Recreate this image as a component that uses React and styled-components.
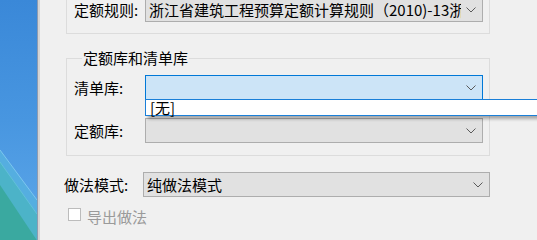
import React from 'react';
import styled, { createGlobalStyle } from 'styled-components';

const GlobalStyle = createGlobalStyle`
  html, body {
    margin: 0;
    padding: 0;
    background: #f0f0f0;
    overflow: hidden;
  }
  body {
    font-family: "Noto Sans CJK SC", "Microsoft YaHei", sans-serif;
    font-size: 15px;
    color: #000;
  }
`;

const Screen = styled.div`
  display: flex;
  width: 537px;
  height: 100vh;
  min-height: 219px;
  overflow: hidden;
`;

const Desktop = styled.div`
  width: 37px;
  flex-shrink: 0;
  background: linear-gradient(180deg, #3a88d8 0px, #4896e0 120px, #5aa5e8 219px);
  overflow: hidden;
`;

const Frame = styled.div`
  width: 3px;
  flex-shrink: 0;
  border-left: 1px solid #8e9bb0;
  background: #d4d4d4;
  box-sizing: border-box;
`;

const Dialog = styled.div`
  flex: 1;
  padding-left: 24px;
  margin-top: -20px;
  display: flex;
  flex-direction: column;
  align-items: flex-start;
`;

const Group = styled.div`
  width: 424px;
  box-sizing: border-box;
  margin-left: 2px;
  margin-top: ${p => p.$top || 0}px;
  border: 1px solid #dcdcdc;
  padding: ${p => p.$pad};
  display: flex;
  flex-direction: column;
`;

const GroupTitle = styled.span`
  display: block;
  width: fit-content;
  margin: -10px 0 8px 8px;
  padding: 0 1px;
  line-height: 18px;
  background: #f0f0f0;
`;

const Row = styled.div`
  display: flex;
  align-items: center;
  margin-top: ${p => p.$top || 0}px;
`;

const Label = styled.span`
  width: ${p => p.$w}px;
  flex-shrink: 0;
  line-height: 18px;
  white-space: nowrap;
`;

const Combo = styled.div`
  position: relative;
  width: ${p => p.$w}px;
  height: 25px;
  box-sizing: border-box;
  display: flex;
  align-items: center;
  border: 1px solid ${p => (p.$focus ? '#0078d7' : '#adadad')};
  background: ${p => (p.$focus ? '#cce4f7' : '#e1e1e1')};
`;

const ComboText = styled.span`
  flex: 1;
  min-width: 0;
  overflow: hidden;
  white-space: nowrap;
  padding-left: 3px;
  line-height: 23px;
`;

const Arrow = styled.span`
  width: 20px;
  flex-shrink: 0;
  display: flex;
  justify-content: center;
  padding-right: 1px;
`;

const DropList = styled.div`
  position: absolute;
  left: -1px;
  top: 100%;
  width: 420px;
  height: 17px;
  box-sizing: border-box;
  border: 1px solid #1a7fd8;
  background: #fff;
  box-shadow: 3px 3px 3px rgba(0, 0, 0, 0.3);
  z-index: 2;
`;

const ListItem = styled.div`
  padding-left: 4px;
  line-height: 15px;
  height: 15px;
  white-space: nowrap;
`;

const CheckRow = styled.div`
  display: flex;
  align-items: flex-start;
  margin-top: 11px;
  margin-left: 4px;
`;

const CheckBox = styled.span`
  width: 13px;
  height: 13px;
  box-sizing: border-box;
  border: 1px solid #bcbcbc;
  background: #fff;
  margin-right: 6px;
  flex-shrink: 0;
`;

const CheckLabel = styled.span`
  color: #9a9a9a;
  line-height: 15px;
  margin-top: 1px;
`;

const Chevron = () => (
  <svg width="10" height="6" viewBox="0 0 10 6">
    <path d="M0.5 0.5 L5 5 L9.5 0.5" fill="none" stroke="#5a5a5a" strokeWidth="1" />
  </svg>
);

const Wallpaper = () => (
  <svg width="37" height="260" viewBox="0 0 37 260" style={{ display: 'block' }}>
    <polygon points="0,150 37,200 37,260 0,260" fill="#55aee0" />
    <polygon points="0,162 37,214 37,260 0,260" fill="#4cb3c8" />
    <polygon points="0,185 50,260 0,260" fill="#3aa9a0" />
    <line x1="0" y1="150" x2="37" y2="200" stroke="#7cc6ee" strokeWidth="1" />
    <line x1="0" y1="162" x2="37" y2="214" stroke="#62c0d8" strokeWidth="1" />
  </svg>
);

function App() {
  return (
    <Screen>
      <GlobalStyle />
      <Desktop>
        <Wallpaper />
      </Desktop>
      <Frame />
      <Dialog>
        <Group $pad="16px 6px 11px 7px">
          <Row>
            <Label $w={71}>定额规则:</Label>
            <Combo $w={338}>
              <ComboText>浙江省建筑工程预算定额计算规则（2010)-13浙江省建设工程计价规则</ComboText>
              <Arrow><Chevron /></Arrow>
            </Combo>
          </Row>
        </Group>

        <Group $top={24} $pad="0 6px 12px 7px">
          <GroupTitle>定额库和清单库</GroupTitle>
          <Row>
            <Label $w={71}>清单库:</Label>
            <Combo $w={338} $focus>
              <ComboText />
              <Arrow><Chevron /></Arrow>
              <DropList>
                <ListItem>[无]</ListItem>
              </DropList>
            </Combo>
          </Row>
          <Row $top={18}>
            <Label $w={71}>定额库:</Label>
            <Combo $w={338}>
              <ComboText />
              <Arrow><Chevron /></Arrow>
            </Combo>
          </Row>
        </Group>

        <Row $top={16}>
          <Label $w={79}>做法模式:</Label>
          <Combo $w={347}>
            <ComboText>纯做法模式</ComboText>
            <Arrow><Chevron /></Arrow>
          </Combo>
        </Row>

        <CheckRow>
          <CheckBox />
          <CheckLabel>导出做法</CheckLabel>
        </CheckRow>
      </Dialog>
    </Screen>
  );
}

export default App;
